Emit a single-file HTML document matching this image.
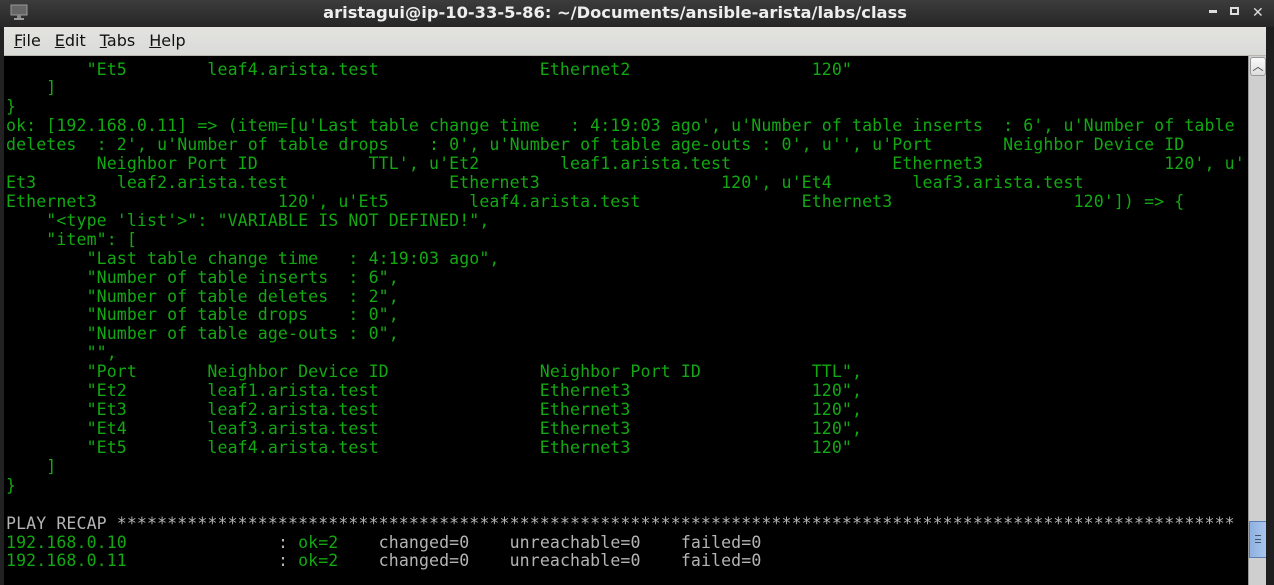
<!DOCTYPE html>
<html><head><meta charset="utf-8"><style>
*{margin:0;padding:0;box-sizing:border-box}
body{width:1274px;height:585px;overflow:hidden;background:#222;position:relative;font-family:"DejaVu Sans","Liberation Sans",sans-serif}
#title{position:absolute;left:0;top:0;width:1274px;height:27px;background:linear-gradient(#3c3c3c,#262626);color:#eee;font-weight:bold;font-size:16.3px;text-align:center;line-height:25px;padding-right:44px}
#menu{position:absolute;left:4px;top:27px;width:1262px;height:29px;background:linear-gradient(#e4e3df,#d9dbd8);border-bottom:1px solid #b8b6ae;font-size:16px;line-height:28px;color:#111}
#menu span{margin-left:10px;margin-right:4px}
#term{position:absolute;left:4px;top:56px;width:1244px;height:529px;background:#000;overflow:hidden}
pre{font-family:"DejaVu Sans Mono","Liberation Mono",monospace;font-size:16.57px;letter-spacing:0.1px;line-height:18.92px;color:#12a812;padding:4.5px 0 0 2px;white-space:pre}
.g{color:#b4b4b4}
#sb{position:absolute;left:1248px;top:56px;width:18px;height:529px;background:#cfcfcf;border-left:1px solid #999}
#up{position:absolute;left:1px;top:1px;width:16px;height:19px;background:linear-gradient(#fafafa,#ddd);border:1px solid #999;border-radius:3px;font-size:11px;text-align:center;line-height:18px;color:#333}
#th{position:absolute;left:0;top:465px;width:18px;height:37px;background:linear-gradient(90deg,#8fb1e0,#a9c6ee);border:1px solid #5a7fb0}
#rb{position:absolute;left:1266px;top:27px;width:8px;height:558px;background:#1e1e1e}
.btn{position:absolute}
</style></head><body>
<div id="title"><svg style="position:absolute;left:10px;top:4px" width="18" height="16"><rect x="1" y="1" width="16" height="10" fill="#666" stroke="#999"/><rect x="7" y="11" width="4" height="3" fill="#888"/><rect x="4" y="14" width="10" height="2" fill="#999"/></svg>aristagui@ip-10-33-5-86: ~/Documents/ansible-arista/labs/class<span class="btn" style="left:1209px;top:10px;width:8px;height:3px;background:#ddd"></span><span class="btn" style="left:1230px;top:7px;width:9px;height:8px;border:2px solid #ddd"></span><span class="btn" style="left:1252px;top:1px;font-size:14px;color:#ddd">✕</span></div>
<div id="menu"><span><u>F</u>ile</span><span><u>E</u>dit</span><span><u>T</u>abs</span><span><u>H</u>elp</span></div>
<div id="term"><pre>        "Et5        leaf4.arista.test                Ethernet2                  120"
    ]
}
ok: [192.168.0.11] =&gt; (item=[u'Last table change time   : 4:19:03 ago', u'Number of table inserts  : 6', u'Number of table
deletes  : 2', u'Number of table drops    : 0', u'Number of table age-outs : 0', u'', u'Port       Neighbor Device ID
         Neighbor Port ID           TTL', u'Et2        leaf1.arista.test                Ethernet3                  120', u'
Et3        leaf2.arista.test                Ethernet3                  120', u'Et4        leaf3.arista.test
Ethernet3                  120', u'Et5        leaf4.arista.test                Ethernet3                  120']) =&gt; {
    "&lt;type 'list'&gt;": "VARIABLE IS NOT DEFINED!",
    "item": [
        "Last table change time   : 4:19:03 ago",
        "Number of table inserts  : 6",
        "Number of table deletes  : 2",
        "Number of table drops    : 0",
        "Number of table age-outs : 0",
        "",
        "Port       Neighbor Device ID               Neighbor Port ID           TTL",
        "Et2        leaf1.arista.test                Ethernet3                  120",
        "Et3        leaf2.arista.test                Ethernet3                  120",
        "Et4        leaf3.arista.test                Ethernet3                  120",
        "Et5        leaf4.arista.test                Ethernet3                  120"
    ]
}

<span class="g">PLAY RECAP ***************************************************************************************************************</span>
192.168.0.10               <span class="g">:</span> ok=2    <span class="g">changed=0    unreachable=0    failed=0</span>
192.168.0.11               <span class="g">:</span> ok=2    <span class="g">changed=0    unreachable=0    failed=0</span>
</pre></div>
<div id="sb"><div id="up">︿</div><div id="th"><div style="position:absolute;left:5px;top:13px;width:6px;height:8px;border-top:1px solid #456;border-bottom:1px solid #456"></div><div style="position:absolute;left:5px;top:17px;width:6px;height:1px;background:#456"></div></div></div>
<div id="rb"></div>
</body></html>
